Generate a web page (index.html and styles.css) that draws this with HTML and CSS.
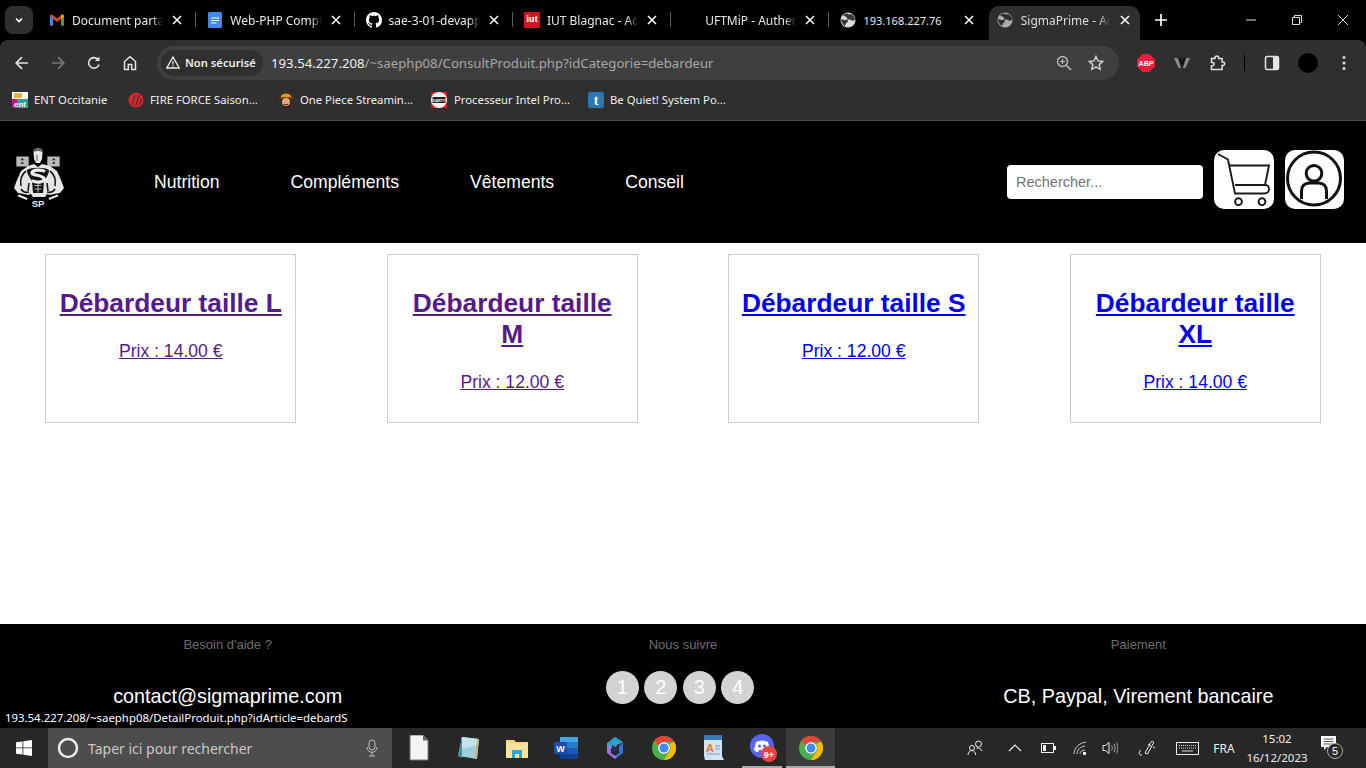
FILE: index.html
```html
<!DOCTYPE html>
<html lang="fr">
<head>
<meta charset="utf-8">
<title>SigmaPrime</title>
<link rel="stylesheet" href="styles.css">
</head>
<body>
<div class="screen">
  <div class="tabstrip">
    <div class="tab-menu"><svg width="12" height="12" viewBox="0 0 12 12"><path d="M3 4.500l3 3 3-3" fill="none" stroke="#fff" stroke-width="1.600"/></svg></div>
    <div class="tab sep">
      <svg class="fav" width="16" height="16" viewBox="0 0 16 16"><path d="M1 3.500v10h3V7l4 3 4-3v6.500h3v-10l-1.500-1.200L8 6.500 2.500 2.300z" fill="#ea4335"/><path d="M1 3.500v10h3V6.500z" fill="#4285f4"/><path d="M15 3.500v10h-3V6.500z" fill="#34a853"/><path d="M12 6.800L15 4.500 13.500 2.300 12 3.500z" fill="#fbbc04"/></svg>
      <span class="tab-title">Document partagé</span>
      <svg class="tab-x" width="10" height="10" viewBox="0 0 10 10"><path d="M1 1l8 8M9 1l-8 8" stroke="#fff" stroke-width="1.500"/></svg>
    </div>
    <div class="tab sep">
      <svg class="fav" width="16" height="16" viewBox="0 0 16 16"><rect x="1" width="14" height="16" rx="1.500" fill="#4285f4"/><path d="M4 6h8M4 8.500h8M4 11h5.500" stroke="#fff" stroke-width="1.200"/></svg>
      <span class="tab-title">Web-PHP Compte rendu</span>
      <svg class="tab-x" width="10" height="10" viewBox="0 0 10 10"><path d="M1 1l8 8M9 1l-8 8" stroke="#fff" stroke-width="1.500"/></svg>
    </div>
    <div class="tab sep">
      <svg class="fav" width="16" height="16" viewBox="0 0 16 16"><path fill="#fff" d="M8 0C3.580 0 0 3.580 0 8c0 3.540 2.290 6.530 5.470 7.590.4.070.55-.17.55-.38 0-.19-.01-.82-.01-1.490-2.010.37-2.530-.49-2.690-.94-.09-.23-.48-.94-.82-1.130-.28-.15-.68-.52-.01-.53.63-.01 1.080.58 1.230.82.72 1.210 1.870.87 2.330.66.07-.52.28-.87.51-1.070-1.780-.2-3.640-.89-3.640-3.950 0-.87.31-1.590.82-2.150-.08-.2-.36-1.020.08-2.120 0 0 .67-.21 2.200.82.64-.18 1.320-.27 2-.27s1.360.09 2 .27c1.530-1.040 2.200-.82 2.200-.82.44 1.100.16 1.920.08 2.120.51.560.82 1.270.82 2.150 0 3.070-1.870 3.750-3.650 3.950.29.250.54.730.54 1.480 0 1.070-.01 1.930-.01 2.200 0 .21.150.46.550.38A8.013 8.013 0 0016 8c0-4.420-3.580-8-8-8z"/></svg>
      <span class="tab-title">sae-3-01-devapp</span>
      <svg class="tab-x" width="10" height="10" viewBox="0 0 10 10"><path d="M1 1l8 8M9 1l-8 8" stroke="#fff" stroke-width="1.500"/></svg>
    </div>
    <div class="tab sep">
      <svg class="fav" width="16" height="16" viewBox="0 0 16 16"><rect width="16" height="16" fill="#d3131f"/><text x="8" y="10" text-anchor="middle" class="fav-iut">iut</text></svg>
      <span class="tab-title">IUT Blagnac - Accueil</span>
      <svg class="tab-x" width="10" height="10" viewBox="0 0 10 10"><path d="M1 1l8 8M9 1l-8 8" stroke="#fff" stroke-width="1.500"/></svg>
    </div>
    <div class="tab sep">
      <svg class="fav" width="16" height="16" viewBox="0 0 16 16"><circle cx="8" cy="8" r="8" fill="#000"/></svg>
      <span class="tab-title">UFTMiP - Authentification</span>
      <svg class="tab-x" width="10" height="10" viewBox="0 0 10 10"><path d="M1 1l8 8M9 1l-8 8" stroke="#fff" stroke-width="1.500"/></svg>
    </div>
    <div class="tab">
      <svg class="fav" width="16" height="16" viewBox="0 0 16 16"><circle cx="8" cy="8" r="7.500" fill="#dadce0"/><path d="M3 3.500c2 .5 3 1 4 2.500s-1 2-2.500 2S2 7 1 7c0 3 2 6 4 7 1-2 .5-3 2-3.500s1-2 0-2.500 3-1 4 0 2.500 1 4 0c0-2-1-4-3-5.500C10 2 9 3 8 2S5 1.500 3 3.500z" fill="#000" opacity=".75"/></svg>
      <span class="tab-title tab-num">193.168.227.76</span>
      <svg class="tab-x" width="10" height="10" viewBox="0 0 10 10"><path d="M1 1l8 8M9 1l-8 8" stroke="#fff" stroke-width="1.500"/></svg>
    </div>
    <div class="tab tab-active">
      <svg class="fav" width="16" height="16" viewBox="0 0 16 16"><circle cx="8" cy="8" r="7.500" fill="#a8abb0"/><path d="M3 3.500c2 .5 3 1 4 2.500s-1 2-2.500 2S2 7 1 7c0 3 2 6 4 7 1-2 .5-3 2-3.500s1-2 0-2.500 3-1 4 0 2.500 1 4 0c0-2-1-4-3-5.500C10 2 9 3 8 2S5 1.500 3 3.500z" fill="#2f2f2f"/></svg>
      <span class="tab-title">SigmaPrime - Accueil</span>
      <svg class="tab-x" width="10" height="10" viewBox="0 0 10 10"><path d="M1 1l8 8M9 1l-8 8" stroke="#fff" stroke-width="1.500"/></svg>
    </div>
    <div class="tab-new"><svg width="12" height="12" viewBox="0 0 12 12"><path d="M6 0v12M0 6h12" stroke="#fff" stroke-width="1.700"/></svg></div>
    <div class="win-ctrls">
      <div class="win-btn"><svg width="10" height="10" viewBox="0 0 10 10"><path d="M0 5h10" stroke="#ddd" stroke-width="1"/></svg></div>
      <div class="win-btn"><svg width="10" height="10" viewBox="0 0 10 10"><path d="M.5 2.500h7v7h-7zM2.500 2.500v-2h7v7h-2" fill="none" stroke="#ddd" stroke-width="1"/></svg></div>
      <div class="win-btn"><svg width="10" height="10" viewBox="0 0 10 10"><path d="M0 0l10 10M10 0L0 10" stroke="#ddd" stroke-width="1"/></svg></div>
    </div>
  </div>

  <div class="toolbar">
    <div class="tool"><svg width="16" height="16" viewBox="0 0 16 16"><path d="M14 8H2.500M8 2.200L2.200 8 8 13.800" fill="none" stroke="#e3e3e3" stroke-width="1.700"/></svg></div>
    <div class="tool"><svg width="16" height="16" viewBox="0 0 16 16"><path d="M2 8h11.500M8 2.200L13.800 8 8 13.800" fill="none" stroke="#777" stroke-width="1.700"/></svg></div>
    <div class="tool"><svg width="16" height="16" viewBox="0 0 16 16"><path d="M13 9.500A5.300 5.300 0 1 1 12 4.500" fill="none" stroke="#e3e3e3" stroke-width="1.600"/><path d="M13.500 1.500v4.500H9z" fill="#e3e3e3"/></svg></div>
    <div class="tool"><svg width="16" height="16" viewBox="0 0 16 16"><path d="M2.500 14.500V6.500L8 1.800l5.500 4.700v8h-3.800V9.500H6.300v5z" fill="none" stroke="#e3e3e3" stroke-width="1.500"/></svg></div>
    <div class="omnibox">
      <div class="chip"><svg width="14" height="13" viewBox="0 0 14 13"><path d="M7 1L.8 12h12.400z" fill="none" stroke="#eee" stroke-width="1.300"/><path d="M7 5v3.500M7 9.500v1.200" stroke="#eee" stroke-width="1.200"/></svg><span>Non sécurisé</span></div>
      <div class="url"><span class="url-host">193.54.227.208</span>/~saephp08/ConsultProduit.php?idCategorie=debardeur</div>
      <div class="omni-icon"><svg width="16" height="16" viewBox="0 0 16 16"><circle cx="6.500" cy="6.500" r="5" fill="none" stroke="#bbb" stroke-width="1.400"/><path d="M10.200 10.200L15 15" stroke="#bbb" stroke-width="1.600"/><path d="M4 6.500h5M6.500 4v5" stroke="#bbb" stroke-width="1.200"/></svg></div>
      <div class="omni-icon"><svg width="16" height="16" viewBox="0 0 16 16"><path d="M8 1.500l2 4.400 4.800.5-3.600 3.200 1 4.700L8 11.900l-4.200 2.400 1-4.700L1.200 6.400 6 5.900z" fill="none" stroke="#ccc" stroke-width="1.500"/></svg></div>
    </div>
    <div class="tool tool-first"><svg width="18" height="18" viewBox="0 0 18 18"><path d="M5.500 0h7L18 5.500v7L12.500 18h-7L0 12.500v-7z" fill="#ec1c3f"/><text x="9" y="11.500" text-anchor="middle" class="fav-abp">ABP</text></svg></div>
    <div class="tool"><svg width="18" height="14" viewBox="0 0 18 14"><path d="M1 2l4 0 3 10-2.500 0zM17 2l-4 0-3 10 2.500 0z" fill="#8a8a8a"/><path d="M5 2l4 9 4-9-2.500 0L9 6 7.500 2z" fill="#111"/></svg></div>
    <div class="tool"><svg width="16" height="16" viewBox="0 0 16 16"><path d="M1.500 3.500h3.500V2.800a1.800 1.800 0 0 1 3.600 0v.7h3.500v3.500h.7a1.800 1.800 0 0 1 0 3.600h-.7v4H1.500v-3.800h1a1.700 1.700 0 0 0 0-3.400h-1z" fill="none" stroke="#e3e3e3" stroke-width="1.500"/></svg></div>
    <div class="tool-sep"></div>
    <div class="tool"><svg width="16" height="16" viewBox="0 0 16 16"><rect x="1.500" y="1.500" width="13" height="13" rx="1.500" fill="none" stroke="#e3e3e3" stroke-width="1.500"/><rect x="9" y="2" width="5" height="12" fill="#e3e3e3"/></svg></div>
    <div class="tool"><div class="avatar"></div></div>
    <div class="tool"><svg width="4" height="16" viewBox="0 0 4 16"><circle cx="2" cy="2.500" r="1.500" fill="#ddd"/><circle cx="2" cy="8" r="1.500" fill="#ddd"/><circle cx="2" cy="13.500" r="1.500" fill="#ddd"/></svg></div>
  </div>

  <div class="bookmarks">
    <div class="bm bm-1"><svg width="16" height="16" viewBox="0 0 16 16"><rect width="16" height="16" fill="#fff"/><rect y="7" width="5" height="9" fill="#c2187a"/><rect x="5" y="7" width="11" height="9" fill="#2d9c9a"/><rect x="2" y="1" width="8" height="5" fill="#e8b23a"/><text x="8" y="14.500" text-anchor="middle" class="fav-ent">ent</text></svg><span>ENT Occitanie</span></div>
    <div class="bm bm-2"><svg width="16" height="16" viewBox="0 0 16 16"><circle cx="8" cy="8" r="7.500" fill="#d6262b"/><path d="M4 13l3-9M7.500 14l4-11M11 13l2.500-6" stroke="#2f2f2f" stroke-width="1"/></svg><span>FIRE FORCE Saison...</span></div>
    <div class="bm bm-3"><svg width="16" height="16" viewBox="0 0 16 16"><path d="M3 6c0-7 10-7 10 0 1 7-1 10-5 10S2 13 3 6z" fill="#3a2016"/><path d="M2.500 5.500C3 0 13 0 13.500 5.500z" fill="#d9a02b"/><path d="M1 6h14" stroke="#8c3d12" stroke-width="1.500"/><circle cx="8" cy="10" r="4" fill="#e0a878"/><path d="M6 12.500h4" stroke="#5a2a14"/></svg><span>One Piece Streamin...</span></div>
    <div class="bm bm-4"><svg width="16" height="16" viewBox="0 0 16 16"><rect width="16" height="16" fill="#e3101c"/><circle cx="8" cy="8" r="8" fill="#fff"/><rect x="1.500" y="5" width="13" height="6" fill="#222"/><text x="8" y="9.500" text-anchor="middle" class="fav-darty">DARTY</text></svg><span>Processeur Intel Pro...</span></div>
    <div class="bm bm-5"><svg width="16" height="16" viewBox="0 0 16 16"><rect width="16" height="16" rx="2" fill="#2d77b6"/><text x="8" y="13" text-anchor="middle" class="fav-t">t</text></svg><span>Be Quiet! System Po...</span></div>
  </div>

  <div class="page">
    <header class="site-header">
      <svg class="logo" width="51" height="62" viewBox="0 0 51 62">
        <path d="M3.300 9.500h12.400v10H3.300zM34.300 9.500h12.400v10H34.300z" fill="#b9b9b9"/>
        <path d="M8 12.500h2.500M8 16h2.500M39.500 12.500H42M39.500 16H42" stroke="#222" stroke-width="1.300"/>
        <path d="M20.500 5c0-5 9-5 9 0l-.5 7-2 4h-4l-2-4z" fill="#e8e8e8"/>
        <path d="M20 5.500C20-1 30-1 30 5.500c-3-2-7-2-10 0z" fill="#666"/>
        <path d="M24 8v6" stroke="#555"/>
        <path d="M21 17l4 3 4-3 8 2 7 5 4 9 3 8-4 5-6 1-4 1-3-1-2 3h-12l-2-3-3 1-4-1-6-1-4-5 3-8 4-9 7-5z" fill="#e6e6e6"/>
        <path d="M13 24c-4 3-6 9-5 15M37 24c4 3 6 9 5 15M8 42c2 3 5 4 8 3M42 42c-2 3-5 4-8 3M16 36l-1 8M34 36l1 8" fill="none" stroke="#1a1a1a" stroke-width="1.600"/>
        <path d="M14 23c4-3 18-3 22 0 0 4-3 8-5 11l-1 12H20l-1-12c-2-3-5-7-5-11z" fill="#111"/>
        <path d="M32 24.500c-3-2-12-2-13 1s11 2.500 12 6-7 5-12 2" fill="none" stroke="#f0f0f0" stroke-width="3.200"/>
        <path d="M21.500 38.500h7M21.500 42h7M25 36.500v9" stroke="#bbb" stroke-width="1"/>
        <path d="M5.500 47.500l9 3.500-.8 2-9.200-3.700zM44.500 47.500l-9 3.500.8 2 9.200-3.700z" fill="#eee"/>
        <text x="25" y="60" text-anchor="middle" class="logo-text">SP</text>
      </svg>
      <nav class="site-nav">
        <a>Nutrition</a>
        <a>Compléments</a>
        <a>Vêtements</a>
        <a>Conseil</a>
      </nav>
      <input class="search" type="text" placeholder="Rechercher...">
      <div class="icon-box">
        <svg width="60" height="59" viewBox="0 0 60 59"><path d="M4 4l10 5.500 7 34h29q5 0 5-4.500t-5-4H21M16 15.500h39L51 35" fill="none" stroke="#1a1a1a" stroke-width="1.900"/><circle cx="24.500" cy="51.700" r="3.400" fill="none" stroke="#1a1a1a" stroke-width="1.900"/><circle cx="48" cy="51.700" r="3.400" fill="none" stroke="#1a1a1a" stroke-width="1.900"/></svg>
      </div>
      <div class="icon-box">
        <svg width="59" height="59" viewBox="0 0 59 59"><circle cx="29" cy="28.500" r="26.500" fill="none" stroke="#111" stroke-width="3"/><circle cx="29" cy="23.300" r="7.800" fill="none" stroke="#111" stroke-width="3"/><path d="M16.500 49V41c0-5 3-8 8-8h9c5 0 8 3 8 8v8" fill="none" stroke="#111" stroke-width="3"/></svg>
      </div>
    </header>

    <main class="products">
      <div class="cell"><a class="card visited">
        <h2>Débardeur taille L</h2>
        <p>Prix : 14.00 €</p>
      </a></div>
      <div class="cell"><a class="card visited">
        <h2>Débardeur taille M</h2>
        <p>Prix : 12.00 €</p>
      </a></div>
      <div class="cell"><a class="card">
        <h2>Débardeur taille S</h2>
        <p>Prix : 12.00 €</p>
      </a></div>
      <div class="cell"><a class="card">
        <h2>Débardeur taille XL</h2>
        <p>Prix : 14.00 €</p>
      </a></div>
    </main>

    <footer class="site-footer">
      <div class="foot-col">
        <h3>Besoin d'aide ?</h3>
        <p>contact@sigmaprime.com</p>
      </div>
      <div class="foot-col">
        <h3>Nous suivre</h3>
        <div class="socials"><span>1</span><span>2</span><span>3</span><span>4</span></div>
      </div>
      <div class="foot-col">
        <h3>Paiement</h3>
        <p>CB, Paypal, Virement bancaire</p>
      </div>
    </footer>
    <div class="status">193.54.227.208/~saephp08/DetailProduit.php?idArticle=debardS</div>
  </div>

  <div class="taskbar">
    <div class="start"><svg width="16" height="16" viewBox="0 0 16 16"><path d="M0 2.300L6.500 1.400V7.500H0zM7.300 1.300L16 0V7.500H7.300zM0 8.300H6.500V14.600L0 13.700zM7.300 8.300H16V16L7.300 14.700z" fill="#fff"/></svg></div>
    <div class="task-search">
      <svg width="22" height="22" viewBox="0 0 22 22"><circle cx="11" cy="11" r="9" fill="none" stroke="#eee" stroke-width="2.400"/></svg>
      <span>Taper ici pour rechercher</span>
      <svg class="mic" width="12" height="18" viewBox="0 0 12 18"><rect x="3" y="1" width="6" height="10" rx="3" fill="none" stroke="#bbb"/><path d="M1 8c0 7 10 7 10 0M6 13v4M3 17h6" fill="none" stroke="#bbb"/></svg>
    </div>
    <div class="task-icons">
      <div class="task-app"><svg width="20" height="26" viewBox="0 0 20 26"><path d="M1 0h13l5 5.500V25H1z" fill="#f5f5f5" stroke="#777"/><path d="M14 0l5 5.500h-5z" fill="#666"/></svg></div>
      <div class="task-app"><svg width="24" height="26" viewBox="0 0 24 26"><path d="M6 2l17 2-2 20-19-3z" fill="#9fd0d8"/><path d="M6 2l17 2-1 6L4 14z" fill="#c5e3e6"/><path d="M6 2L2 21l4 2z" fill="#4c8a94"/><path d="M23 4l-2 20-2 0 2-20z" fill="#c9ad7b"/></svg></div>
      <div class="task-app"><svg width="22" height="20" viewBox="0 0 22 20"><path d="M0 2h8l2 2h12v16H0z" fill="#f8d775"/><rect y="5" width="22" height="15" fill="#fbe29b"/><path d="M6 20v-8h10v8h-3v-4H9v4z" fill="#29a8e0"/></svg></div>
      <div class="task-app"><svg width="24" height="22" viewBox="0 0 24 22"><rect x="6" width="18" height="22" rx="1" fill="#2b7cd3"/><rect x="6" y="11" width="18" height="6" fill="#185abd"/><rect x="6" y="17" width="18" height="5" fill="#103f91"/><rect x="6" width="18" height="5" fill="#41a5ee"/><rect y="5" width="13" height="12" rx="1" fill="#1a4fa8"/><text x="6.500" y="14.500" text-anchor="middle" class="fav-w">W</text></svg></div>
      <div class="task-app"><svg width="20" height="24" viewBox="0 0 20 24"><path d="M2 7l8-6 8 5-6 3-2 4-8-2z" fill="#2f9fd8"/><path d="M18 6v11l-8 6-2-2 6-4V10z" fill="#3a70d8"/><path d="M2 7v10l8 6 2-2-6-4v-5z" fill="#9f6fe0"/><path d="M7 9l7 4-7 4z" fill="#2d2d5a"/></svg></div>
      <div class="task-app"><svg width="24" height="24" viewBox="0 0 24 24"><circle cx="12" cy="12" r="12" fill="#4caf50"/><path d="M12 0a12 12 0 0 1 10.400 6H12a6 6 0 0 0-5.600 3.800L2.400 4.500A12 12 0 0 1 12 0z" fill="#ea4335"/><path d="M22.400 6A12 12 0 0 1 12 24l5-8a6 6 0 0 0 0-8z" fill="#fbbc04"/><circle cx="12" cy="12" r="5.800" fill="#fff"/><circle cx="12" cy="12" r="4.500" fill="#4285f4"/></svg></div>
      <div class="task-app"><svg width="22" height="26" viewBox="0 0 22 26"><path d="M2 0h18v21l2 4H3l-1-4z" fill="#d5e3ef"/><rect x="2" width="18" height="5" fill="#3d78b8"/><text x="8" y="17" text-anchor="middle" class="fav-a">A</text><path d="M13 11h5M13 14h5M5 19h13" stroke="#7d9ab5"/></svg></div>
      <div class="task-app task-open"><svg class="discord" width="30" height="30" viewBox="0 0 30 30"><circle cx="12" cy="13" r="12" fill="#5865f2"/><path d="M6 9c4-2 8-2 12 0l2 8c-2 2-3 2-4 2l-1-2h-6l-1 2c-1 0-2 0-4-2z" fill="#fff"/><circle cx="9.500" cy="13" r="1.600" fill="#5865f2"/><circle cx="14.500" cy="13" r="1.600" fill="#5865f2"/><circle cx="19" cy="21" r="8" fill="#ed4245"/><text x="19" y="24.500" text-anchor="middle" class="fav-badge">9+</text></svg></div>
      <div class="task-app task-active"><svg width="24" height="24" viewBox="0 0 24 24"><circle cx="12" cy="12" r="12" fill="#4caf50"/><path d="M12 0a12 12 0 0 1 10.400 6H12a6 6 0 0 0-5.600 3.800L2.400 4.500A12 12 0 0 1 12 0z" fill="#ea4335"/><path d="M22.400 6A12 12 0 0 1 12 24l5-8a6 6 0 0 0 0-8z" fill="#fbbc04"/><circle cx="12" cy="12" r="5.800" fill="#fff"/><circle cx="12" cy="12" r="4.500" fill="#4285f4"/></svg></div>
    </div>
    <div class="tray">
      <div class="t-people"><svg width="16" height="16" viewBox="0 0 16 16"><circle cx="5" cy="8" r="2.500" fill="none" stroke="#eee"/><path d="M1 15c0-3 2-4.500 4-4.500s3.500 1.500 3.500 4.500" fill="none" stroke="#eee"/><circle cx="11.500" cy="4" r="3" fill="none" stroke="#eee"/><path d="M9.500 8c2 0 4.500.5 5.500 3" fill="none" stroke="#eee"/></svg></div>
      <div class="t-chev"><svg width="14" height="8" viewBox="0 0 14 8"><path d="M1 7l6-6 6 6" fill="none" stroke="#eee" stroke-width="1.200"/></svg></div>
      <div class="t-bat"><svg width="15" height="10" viewBox="0 0 15 10"><rect x=".5" y=".5" width="12" height="9" fill="none" stroke="#eee"/><rect x="2" y="2" width="3" height="6" fill="#eee"/><rect x="13" y="3" width="2" height="4" fill="#eee"/></svg></div>
      <div class="t-wifi"><svg width="14" height="14" viewBox="0 0 14 14"><path d="M1 13C1 7 6 2 13 1M4 13c0-4 3-7 8-8M7 13c0-2 2-4 5-4" fill="none" stroke="#ccc"/><rect x="10" y="11" width="3" height="3" fill="#eee"/></svg></div>
      <div class="t-vol"><svg width="16" height="14" viewBox="0 0 16 14"><path d="M1 4.500h2.500L7 1.500v11l-3.500-3H1z" fill="none" stroke="#eee"/><path d="M9.500 4.500c1 1.500 1 3.500 0 5M12 3c1.500 2.500 1.500 5.500 0 8M14.300 1.500c2 3.500 2 7.500 0 11" fill="none" stroke="#aaa"/></svg></div>
      <div class="t-pen"><svg width="18" height="18" viewBox="0 0 18 18"><path d="M7 14L13 3c1-1.500 3-.5 2.500 1L9.500 15zM10 5l3 2" fill="none" stroke="#eee"/><path d="M3 11c-3 2-2 6 1 5" fill="none" stroke="#eee"/><path d="M15 8l2 1" stroke="#eee"/></svg></div>
      <div class="t-kb"><svg width="23" height="13" viewBox="0 0 23 13"><rect x=".5" y=".5" width="22" height="12" fill="none" stroke="#eee"/><path d="M3 3.500h17M3 6h17" stroke="#ddd" stroke-dasharray="1 1"/><path d="M6 9h11" stroke="#ddd"/></svg></div>
      <div class="t-lang">FRA</div>
      <div class="t-clock"><span>15:02</span><span>16/12/2023</span></div>
      <div class="t-notif"><svg width="26" height="26" viewBox="0 0 26 26"><path d="M1 1h15v11H7l-3 3v-3H1z" fill="#fff"/><path d="M3.500 4h10M3.500 6.500h10M3.500 9h10" stroke="#555"/><circle cx="15" cy="16" r="7.500" fill="#272727" stroke="#aaa"/><text x="15" y="20" text-anchor="middle" class="fav-notif">5</text></svg></div>
      <div class="t-end"></div>
    </div>
  </div>
</div>
</body>
</html>
```

FILE: styles.css
```css
* { box-sizing: border-box; }
html, body { margin: 0; padding: 0; background: #000; }
.screen {
  width: 1366px; height: 768px; display: flex; flex-direction: column; overflow: hidden;
  font-family: "Noto Sans", "Open Sans", sans-serif; color: #fff;
}

/* tab strip */
.tabstrip { height: 40px; background: #000; display: flex; align-items: flex-end; flex: none; }
.tab-menu { width: 28px; height: 28px; margin: 0 5px 6px 5px; border-radius: 8px; background: #2f2f2f; display: flex; align-items: center; justify-content: center; }
.tab { width: 158.300px; height: 32px; padding: 0 14px 8px 11px; display: flex; align-items: center; gap: 7px; font-size: 12px; color: #e8e8e8; position: relative; flex: none; }
.sep::after { content: ""; position: absolute; right: 0; top: 4px; height: 15px; width: 1px; background: #5a5a5a; }
.fav { flex: none; }
.tab-title { flex: 1; min-width: 0; white-space: nowrap; overflow: hidden; -webkit-mask-image: linear-gradient(90deg, #000 88%, transparent); mask-image: linear-gradient(90deg, #000 88%, transparent); }
.tab-num { font-size: 11px; -webkit-mask-image: none; mask-image: none; }
.tab-x { flex: none; margin-left: 2px; }
.tab-active { background: #2f2f2f; border-radius: 10px 10px 0 0; width: 151px; margin-left: 1px; padding-left: 8px; padding-right: 10px; padding-bottom: 6px; height: 34px; color: #ddd; gap: 8px; }
.tab-new { width: 16px; margin: 0 0 14px 15px; height: 12px; display: flex; }
.win-ctrls { display: flex; margin-left: auto; height: 40px; }
.win-btn { width: 46px; display: flex; align-items: center; justify-content: center; }

/* toolbar */
.toolbar { height: 45px; background: #2f2f2f; display: flex; align-items: center; padding: 0 4px; flex: none; border-radius: 8px 8px 0 0; }
.tool { width: 36px; height: 36px; flex: none; display: flex; align-items: center; justify-content: center; }
.tool-first { margin-left: 9px; }
.tool-sep { width: 18px; height: 16px; flex: none; position: relative; }
.tool-sep::after { content: ""; position: absolute; left: 8px; top: 0; width: 1px; height: 16px; background: #000; }
.avatar { width: 20px; height: 20px; border-radius: 50%; background: #000; }
.omnibox { width: 962px; height: 34px; margin-left: 9px; border-radius: 17px; background: #3f3f3f; display: flex; align-items: center; padding: 0 7px 0 4px; flex: none; }
.chip { width: 102px; height: 26px; border-radius: 13px; background: #2f2f2f; display: flex; align-items: center; gap: 5px; padding-left: 5px; font-size: 11.200px; font-weight: 600; color: #eee; flex: none; }
.url { flex: 1; margin-left: 8px; font-size: 13.200px; color: #a8a8a8; white-space: nowrap; }
.url-host { color: #f0f0f0; }
.omni-icon { width: 32px; height: 32px; display: flex; align-items: center; justify-content: center; flex: none; }

/* bookmarks */
.bookmarks { height: 36px; background: #2f2f2f; border-bottom: 1px solid #4a4a4a; display: flex; align-items: center; flex: none; padding: 0 0 6px 12px; font-size: 11.300px; color: #eee; }
.bm { display: flex; align-items: center; gap: 6px; white-space: nowrap; }
.bm-1 { width: 116px; }
.bm-2 { width: 150px; }
.bm-3 { width: 153px; }
.bm-4 { width: 157px; }
.bm-4 svg { margin-right: 1px; }

/* svg text */
.fav-iut { font: bold 10px "Liberation Serif", serif; fill: #fff; }
.fav-abp { font: bold 7px "Liberation Sans", sans-serif; fill: #fff; }
.fav-ent { font: bold 8px "Liberation Sans", sans-serif; fill: #fff; }
.fav-darty { font: bold 3.600px "Liberation Sans", sans-serif; fill: #fff; }
.fav-t { font: bold 14px "Liberation Serif", serif; fill: #fff; }
.fav-w { font: bold 9px "Liberation Sans", sans-serif; fill: #fff; }
.fav-a { font: bold 11px "Liberation Sans", sans-serif; fill: #e8732c; }
.fav-badge { font: bold 9px "Liberation Sans", sans-serif; fill: #fff; }
.fav-notif { font: 11px "Liberation Sans", sans-serif; fill: #fff; }
.logo-text { font: bold 9.500px "Liberation Sans", sans-serif; fill: #eee; }

/* page */
.page { height: 607px; flex: none; display: flex; flex-direction: column; background: #fff; position: relative; font-family: "Liberation Sans", Arial, sans-serif; }
.site-header { height: 122px; background: #000; display: flex; align-items: center; padding: 0 22px 0 13px; flex: none; }
.logo { flex: none; margin-bottom: 8px; }
.site-nav { display: flex; gap: 71px; margin-left: 90px; margin-right: auto; font-size: 17.600px; color: #fff; }
.search { width: 196px; height: 34px; border: 0; border-radius: 4px; background: #fff; padding: 0 9px; font: 14.500px "Liberation Sans", Arial, sans-serif; margin-right: 11px; }
.search::placeholder { color: #757575; }
.icon-box { width: 60px; height: 59px; background: #fff; border-radius: 10px; flex: none; overflow: hidden; margin-bottom: 6px; }
.icon-box + .icon-box { width: 59px; margin-left: 11px; }
.products { flex: 1; display: grid; grid-template-columns: repeat(4, 1fr); align-content: start; padding-top: 11px; background: #fff; }
.cell { display: flex; justify-content: center; }
.card { width: 251px; height: 169px; border: 1px solid #ccc; padding: 0 12px; text-align: center; text-decoration: underline; color: #0000ee; display: block; }
.visited { color: #551a8b; }
.card h2 { margin: 33px 0 0; font-size: 26.300px; line-height: 31px; font-weight: bold; }
.card p { margin: 22px 0 0; font-size: 17.600px; line-height: 20px; }

/* footer */
.site-footer { height: 104px; background: #000; display: grid; grid-template-columns: repeat(3, 1fr); flex: none; text-align: center; }
.foot-col { display: flex; flex-direction: column; align-items: center; }
.foot-col h3 { margin: 13px 0 0; font-size: 13px; line-height: 15px; font-weight: normal; color: #6e6e6e; }
.foot-col p { margin: 31px 0 0; font-size: 19.800px; line-height: 26px; color: #fff; }
.socials { display: flex; gap: 5.500px; margin: 19px 6px 0 0; }
.socials span { width: 33px; height: 33px; border-radius: 50%; background: #d3d3d3; color: #fff; font-size: 20px; line-height: 33px; text-align: center; }
.status { position: absolute; left: 0; bottom: 0; height: 19px; width: 352px; background: #000; color: #fff; padding-left: 5px; font: 11.400px/18px "Noto Sans", sans-serif; white-space: nowrap; }

/* taskbar */
.taskbar { height: 40px; background: #272727; display: flex; flex: none; align-items: stretch; }
.start { width: 48px; flex: none; display: flex; align-items: center; justify-content: center; }
.task-search { width: 344px; flex: none; background: #4d4d4d; display: flex; align-items: center; padding-left: 9px; gap: 9px; font-size: 14px; color: #c8c8c8; }
.mic { margin-left: auto; margin-right: 14px; }
.task-icons { display: flex; margin-left: 2px; flex: none; }
.task-app { width: 49px; display: flex; align-items: center; justify-content: center; flex: none; }
.task-open { background: linear-gradient(#aaa, #aaa) center bottom / 40px 2px no-repeat; }
.task-active { background: #3c3c3c; box-shadow: inset 0 -2px 0 #aaa; }
.discord { margin-left: 6px; }
.tray { margin-left: auto; display: flex; width: 411px; flex: none; font-size: 12px; color: #eee; }
.tray > div { display: flex; align-items: center; justify-content: center; flex: none; }
.t-people { width: 40px; }
.t-chev { width: 40px; }
.t-bat { width: 26px; }
.t-wifi { width: 38px; }
.t-vol { width: 22px; }
.t-pen { width: 52px; }
.t-kb { width: 28px; }
.t-lang { width: 46px; }
.tray .t-clock { width: 60px; flex-direction: column; line-height: 19px; font-size: 11.500px; white-space: nowrap; }
.t-notif { width: 52px; }
.t-end { width: 7px; }
```
